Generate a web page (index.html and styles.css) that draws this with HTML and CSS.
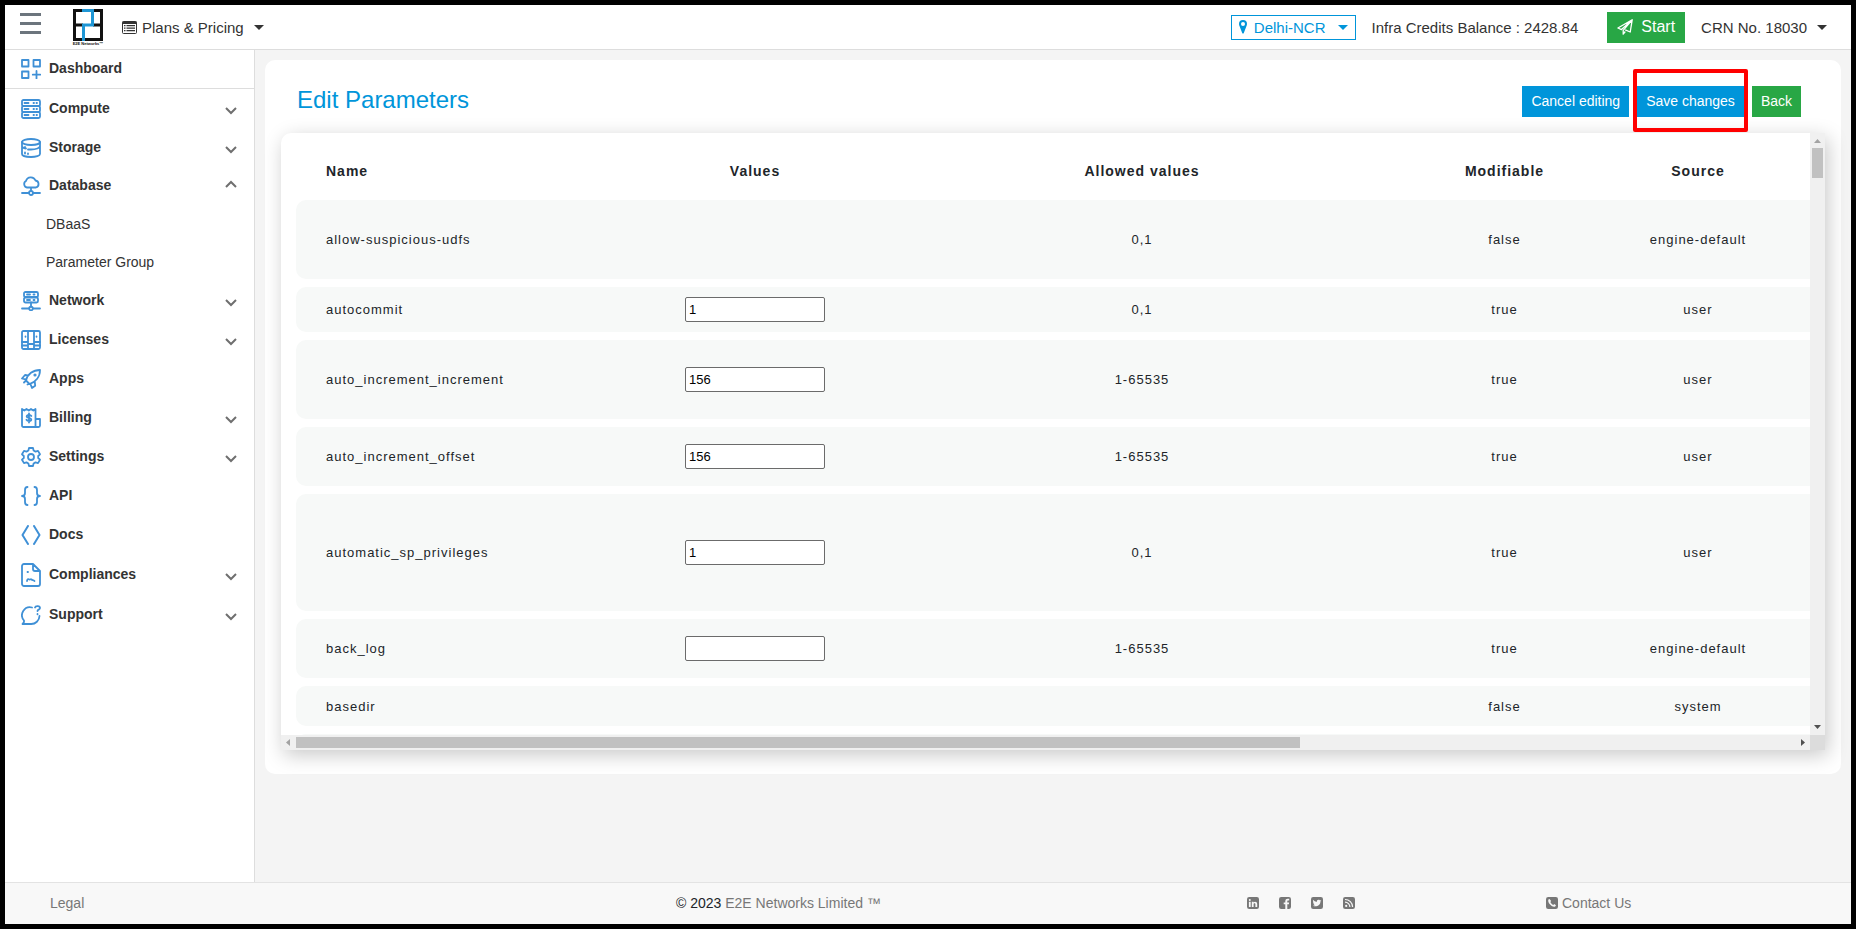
FILE: index.html
```html
<!DOCTYPE html>
<html lang="en">
<head>
<meta charset="utf-8">
<title>Edit Parameters</title>
<link rel="stylesheet" href="styles.css">
</head>
<body>
<div class="app">
  <header class="topbar">
    <button class="menu-toggle" aria-label="Toggle menu"><span></span><span></span><span></span></button>
    <a class="logo" href="#" aria-label="E2E Networks">
      <svg width="30" height="32" viewBox="0 0 30 32" fill="none" stroke-width="3">
        <path stroke="#111" d="M9 1.500H1.500V30.500H11M20 1.500H28.500V30.500H11M1.500 16H10M20 16H28.500"/>
        <path stroke="#1e96d5" d="M9 1.500H19.500V16H10.500V32"/>
      </svg>
      <span class="logo-name">E2E Networks™</span>
    </a>
    <button class="nav-drop">
      <svg width="15" height="13" viewBox="0 0 15 13"><path fill="none" stroke="#333" d="M.5 1.500a1 1 0 0 1 1-1h12a1 1 0 0 1 1 1v10a1 1 0 0 1-1 1h-12a1 1 0 0 1-1-1z"/><path fill="#333" d="M.5.5h14v2.500H.5zM2 4h1.500v1.200H2zM2 6.500h1.500v1.200H2zM2 9h1.500v1.200H2zM4.500 4H13v1.200H4.500zM4.500 6.500H13v1.200H4.500zM4.500 9H13v1.200H4.500z"/></svg>
      Plans &amp; Pricing <i class="caret"></i>
    </button>
    <div class="topbar-right">
      <button class="region">
        <svg width="8" height="14" viewBox="0 0 8 14"><path fill="#0095da" fill-rule="evenodd" d="M4 0a4 4 0 0 1 4 4c0 1-.3 1.600-.6 2.200L4.700 13.200a.8.8 0 0 1-1.400 0L.6 6.200C.3 5.600 0 5 0 4a4 4 0 0 1 4-4zm0 2a2 2 0 1 0 0 4 2 2 0 0 0 0-4z"/></svg>
        Delhi-NCR <i class="caret"></i>
      </button>
      <span class="credits">Infra Credits Balance : 2428.84</span>
      <button class="start">
        <svg width="16" height="16" viewBox="0 0 16 16" fill="none" stroke="#fff" stroke-width="1.300" stroke-linejoin="round"><path d="M15.200.8.9 9l3.600 1.600L15.200.8l-2 12.200-5-2.200M15.200.8 6.200 11.300V15.200L8.300 12.500"/></svg>
        Start
      </button>
      <button class="nav-drop">CRN No. 18030 <i class="caret"></i></button>
    </div>
  </header>

  <div class="body">
    <nav class="sidebar">
      <a class="item dashboard" href="#">
        <svg class="icon" viewBox="0 0 20 20"><path d="M1 1h6.500v6.500H1zM12.500 1H19v6.500h-6.500zM1 12.500h6.500V19H1zM15.500 12v7.500M11.800 15.700h7.500"/></svg><span>Dashboard</span></a>
      <a class="item" href="#">
        <svg class="icon" viewBox="0 0 20 20"><rect x="1" y="1" width="18" height="6" rx="1.500"/><rect x="1" y="7" width="18" height="6" rx="1.500"/><rect x="1" y="13" width="18" height="6" rx="1.500"/><path d="M3.500 4h4M12.500 4h.5M15.500 4h.5M3.500 10h4M12.500 10h.5M15.500 10h.5M3.500 16h4M12.500 16h.5M15.500 16h.5"/></svg><span>Compute</span><svg class="chev" viewBox="0 0 12 8"><path d="M1 1l5 5 5-5"/></svg></a>
      <a class="item" href="#">
        <svg class="icon" viewBox="0 0 20 20"><ellipse cx="10" cy="4" rx="9" ry="3"/><path d="M1 4v12c0 1.700 4 3 9 3s9-1.300 9-3V4M1 8c0 1.500 2 2.300 4 2.500M7 11.500h3c5 0 9-1.500 9-3.500M4 9v1M4 14.500v1M7 15.500v.5"/></svg><span>Storage</span><svg class="chev" viewBox="0 0 12 8"><path d="M1 1l5 5 5-5"/></svg></a>
      <a class="item short" href="#">
        <svg class="icon" viewBox="0 0 20 20"><path d="M6 11.500a3.500 3.500 0 0 1-1-6.500A5 5 0 0 1 14.500 4.500a3.600 3.600 0 0 1 .5 7zM10 11.500V15M1 17H8M12 17h7"/><circle cx="10" cy="17" r="2"/></svg><span>Database</span><svg class="chev up" viewBox="0 0 12 8"><path d="M1 7l5-5 5 5"/></svg></a>
      <a class="sub" href="#">DBaaS</a>
      <a class="sub" href="#">Parameter Group</a>
      <a class="item" href="#">
        <svg class="icon" viewBox="0 0 20 20"><rect x="3" y="1" width="14" height="5" rx="1.500"/><rect x="3" y="6.500" width="14" height="5" rx="1.500"/><path d="M6 3.500H9M12.500 3.500H13.500M6 9H9M12.500 9H13.500M10 11.500V16M1 17.500H8M12 17.500h7"/><circle cx="10" cy="17.500" r="1.800"/></svg><span>Network</span><svg class="chev" viewBox="0 0 12 8"><path d="M1 1l5 5 5-5"/></svg></a>
      <a class="item" href="#">
        <svg class="icon" viewBox="0 0 20 20"><rect x="1" y="1" width="18" height="18" rx="1.500"/><path d="M7 1v18M13 1v18M1 12h6M13 12h6M1 15.500h6M13 15.500h6M7 14h6M4.500 6.500v.3M15.500 6.500v.3"/></svg><span>Licenses</span><svg class="chev" viewBox="0 0 12 8"><path d="M1 1l5 5 5-5"/></svg></a>
      <a class="item" href="#">
        <svg class="icon" viewBox="0 0 20 20"><path d="M5 11.500C6.500 5 12 1 19 1c0 7-4.500 12-10.500 14zM7 6.500 4 6 1 9.500l4.300 1.200M9.500 15.200l1.500 3.800 3.200-2.200-.4-4M5 11.500l-2 2M8.500 15l-2 .5"/><circle cx="14" cy="6" r=".7"/></svg><span>Apps</span></a>
      <a class="item" href="#">
        <svg class="icon" viewBox="0 0 20 20"><path d="M1 1l2.300 1.500L5.500 1l2.300 1.500L10 1l2.300 1.500L14.500 1v18H2.500A1.500 1.500 0 0 1 1 17.500zM14.500 11H19v6.500A1.500 1.500 0 0 1 17.500 19h-3M10.300 8C9.500 6.500 5.500 6.500 5.700 8.600c.2 1.700 4.600 1 4.600 3 0 1.900-3.800 2-4.800.2M8 5.500v9"/></svg><span>Billing</span><svg class="chev" viewBox="0 0 12 8"><path d="M1 1l5 5 5-5"/></svg></a>
      <a class="item" href="#">
        <svg class="icon" viewBox="0 0 20 20"><path d="M8 1h4l.6 2.500 1.900 1.100L17 3.900l2 3.400-1.800 1.700v2l1.800 1.700-2 3.400-2.500-.7-1.900 1.100L12 19H8l-.6-2.500-1.900-1.100-2.500.7-2-3.400L2.800 11V9L1 7.300l2-3.400 2.500.7 1.900-1.100z"/><circle cx="10" cy="10" r="3"/></svg><span>Settings</span><svg class="chev" viewBox="0 0 12 8"><path d="M1 1l5 5 5-5"/></svg></a>
      <a class="item" href="#">
        <svg class="icon" viewBox="0 0 20 20"><path d="M6.500 1C4.500 1 4 2 4 4v3c0 2-1 3-3 3 2 0 3 1 3 3v3c0 2 .5 3 2.500 3M13.500 1c2 0 2.500 1 2.500 3v3c0 2 1 3 3 3-2 0-3 1-3 3v3c0 2-.5 3-2.500 3"/></svg><span>API</span></a>
      <a class="item" href="#">
        <svg class="icon bold" viewBox="0 0 20 20"><path d="M7 1 1.500 10 7 19M13 1l5.500 9L13 19"/></svg><span>Docs</span></a>
      <a class="item tall" href="#">
        <svg class="icon doc" viewBox="0 0 20 24"><path d="M3 1h9l7 7v13a2 2 0 0 1-2 2H3a2 2 0 0 1-2-2V3a2 2 0 0 1 2-2zM12 1v5a2 2 0 0 0 2 2h5M6.500 9h.5M6 18c.5-2.500 1.500-2 2.500-1.500S9.500 15.500 10.500 16.500s2 0 3 1.500"/></svg><span>Compliances</span><svg class="chev" viewBox="0 0 12 8"><path d="M1 1l5 5 5-5"/></svg></a>
      <a class="item" href="#">
        <svg class="icon" viewBox="0 0 20 20"><path d="M11 2.500A8 8 0 0 0 3 15.500V17L1.500 19H10A8.300 8.300 0 0 0 18.500 11M14 2.500C14.500.5 19 .5 19 3c0 1.800-2.500 1.500-2.500 3M16.500 9v.3"/></svg><span>Support</span><svg class="chev" viewBox="0 0 12 8"><path d="M1 1l5 5 5-5"/></svg></a>
    </nav>

    <main class="content">
      <section class="card">
        <div class="card-head">
          <h1>Edit Parameters</h1>
          <div class="actions">
            <button class="btn">Cancel editing</button>
            <div class="marked"><button class="btn">Save changes</button></div>
            <button class="btn green">Back</button>
          </div>
        </div>
        <div class="table-box">
          <div class="scroll-area">
          <table>
            <colgroup><col class="c-name"><col class="c-values"><col class="c-allowed"><col class="c-mod"><col class="c-source"><col></colgroup>
            <thead><tr><th>Name</th><th>Values</th><th>Allowed values</th><th>Modifiable</th><th>Source</th><th></th></tr></thead>
            <tbody>
              <tr class="lines-3"><td>allow-suspicious-udfs</td><td></td><td>0,1</td><td>false</td><td>engine-default</td><td></td></tr>
              <tr><td>autocommit</td><td><input type="text" aria-label="autocommit" value="1"></td><td>0,1</td><td>true</td><td>user</td><td></td></tr>
              <tr class="lines-3"><td>auto_increment_increment</td><td><input type="text" aria-label="auto_increment_increment" value="156"></td><td>1-65535</td><td>true</td><td>user</td><td></td></tr>
              <tr class="lines-2"><td>auto_increment_offset</td><td><input type="text" aria-label="auto_increment_offset" value="156"></td><td>1-65535</td><td>true</td><td>user</td><td></td></tr>
              <tr class="lines-5"><td>automatic_sp_privileges</td><td><input type="text" aria-label="automatic_sp_privileges" value="1"></td><td>0,1</td><td>true</td><td>user</td><td></td></tr>
              <tr class="lines-2"><td>back_log</td><td><input type="text" aria-label="back_log" value=""></td><td>1-65535</td><td>true</td><td>engine-default</td><td></td></tr>
              <tr class="lines-1"><td>basedir</td><td></td><td></td><td>false</td><td>system</td><td></td></tr>
              <tr class="lines-1"><td></td><td></td><td></td><td></td><td></td><td></td></tr>
            </tbody>
          </table>
          </div>
          <div class="bar vertical">
            <svg width="15" height="15" viewBox="0 0 15 15"><path fill="#a3a3a3" d="M4 10h7L7.500 6z"/></svg>
            <div class="track"><div class="thumb"></div></div>
            <svg width="15" height="15" viewBox="0 0 15 15"><path fill="#505050" d="M4 5h7L7.500 9z"/></svg>
          </div>
          <div class="bar horizontal">
            <svg width="15" height="15" viewBox="0 0 15 15"><path fill="#a3a3a3" d="M9 4v7L5 7.500z"/></svg>
            <div class="track"><div class="thumb"></div></div>
            <svg width="15" height="15" viewBox="0 0 15 15"><path fill="#505050" d="M6 4v7l4-3.500z"/></svg>
          </div>
          <div class="corner"></div>
        </div>
      </section>
    </main>
  </div>

  <footer class="footer">
    <a href="#">Legal</a>
    <div><span class="year">© 2023</span> <a href="#">E2E Networks Limited ™</a></div>
    <div class="social">
      <a href="#" aria-label="LinkedIn"><svg width="12" height="12" viewBox="0 0 12 12"><rect width="12" height="12" rx="2.200" fill="#777"/><path fill="#f8f8f8" d="M1.900 4.700h1.800V10H1.900zM2.800 2a1 1 0 1 1 0 2 1 1 0 0 1 0-2zM4.800 4.700h1.700v.7c.8-1.200 3.700-1.200 3.700 1.500V10H8.400V7.200c0-1.400-1.800-1.400-1.800 0V10H4.800z"/></svg></a>
      <a href="#" aria-label="Facebook"><svg width="12" height="12" viewBox="0 0 12 12"><rect width="12" height="12" rx="2.200" fill="#777"/><path fill="#f8f8f8" d="M6.300 12V7.300H4.700V5.500h1.600V4.200c0-1.700 1-2.500 2.500-2.500l1.400.1v1.600h-1c-.8 0-.9.400-.9.900v1.200h1.800l-.2 1.800H8.300V12z"/></svg></a>
      <a href="#" aria-label="Twitter"><svg width="12" height="12" viewBox="0 0 12 12"><rect width="12" height="12" rx="2.200" fill="#777"/><path fill="#f8f8f8" d="M10.300 3.500l-.9.900c.2 3.500-3.900 6.300-7.500 4.300.9 0 1.600-.2 2.200-.7-.7 0-1.200-.5-1.400-1.100h.6c-.8-.2-1.300-.9-1.300-1.700l.7.2c-.8-.6-.9-1.500-.5-2.300A4.700 4.700 0 0 0 5.800 4.900C5.500 3.200 7.500 2.100 8.800 3.300l1.100-.4-.7.900z"/></svg></a>
      <a href="#" aria-label="RSS"><svg width="12" height="12" viewBox="0 0 12 12"><rect width="12" height="12" rx="2.200" fill="#777"/><circle cx="3.200" cy="8.900" r="1.100" fill="#f8f8f8"/><path fill="none" stroke="#f8f8f8" stroke-width="1.200" d="M2 5.200A4.800 4.800 0 0 1 6.900 10M2 2.500A7.500 7.500 0 0 1 9.600 10"/></svg></a>
    </div>
    <a class="contact" href="#"><svg width="12" height="12" viewBox="0 0 12 12"><rect width="12" height="12" rx="2.200" fill="#777"/><path fill="#f8f8f8" d="M3.600 2 2.400 2.600C1.200 5.500 5.800 10.800 9.200 9.600L10 8.300 8.200 7.100l-.9.900C6 7.400 5 6.300 4.400 5l.7-.9z"/></svg>Contact Us</a>
  </footer>
</div>
</body>
</html>
```
FILE: styles.css
```css
* { box-sizing: border-box; }
body { margin: 0; font-family: "Liberation Sans", Arial, sans-serif; font-size: 14px; color: #333; }
a { color: inherit; text-decoration: none; }
button { font: inherit; color: inherit; background: none; border: 0; padding: 0; cursor: pointer; }
svg { display: block; flex: none; }

.app { display: flex; flex-direction: column; min-height: 100vh; border: 5px solid #000; background: #f4f4f4; }

.topbar { display: flex; align-items: center; height: 45px; padding: 0 24px 0 15px; background: #fff; border-bottom: 1px solid #ddd; font-size: 15px; }
.menu-toggle { display: flex; flex-direction: column; gap: 6px; width: 21px; margin-bottom: 8px; }
.menu-toggle span { height: 3px; background: #6c757d; }
.logo { display: flex; flex-direction: column; align-items: center; width: 30px; margin: 0 19px 0 32px; }
.logo-name { font-size: 4px; line-height: 5px; font-weight: bold; color: #111; white-space: nowrap; }
.nav-drop { display: flex; align-items: center; gap: 5px; white-space: nowrap; }
.caret { margin-left: 5px; border: 5px solid transparent; border-top-color: currentColor; border-bottom: 0; }
.topbar-right { display: flex; align-items: center; margin-left: auto; }
.region { display: flex; align-items: center; gap: 7px; height: 25px; padding: 0 7px; border: 1px solid #0095da; color: #0095da; }
.credits { margin: 0 29px 0 16px; }
.start { display: flex; align-items: center; gap: 8px; height: 31px; padding: 0 10px; margin-right: 16px; background: #28a745; color: #fff; font-size: 16px; }

.body { display: flex; flex: 1; }
.sidebar { flex: 0 0 250px; background: #fff; border-right: 1px solid #ddd; }
.item { display: flex; align-items: center; height: 39px; padding: 0 17px 0 16px; font-weight: bold; }
.item span { padding-bottom: 2px; }
.item.dashboard { border-bottom: 1px solid #ddd; }
.item.short { height: 38px; }
.item.tall { height: 41px; }
.icon { width: 20px; height: 20px; margin-right: 8px; fill: none; stroke: #3f90d6; stroke-width: 1.800; stroke-linejoin: round; stroke-linecap: round; }
.icon.bold { stroke-width: 2; }
.icon.doc { height: 24px; }
.chev { width: 12px; height: 8px; margin: 5px 0 0 auto; fill: none; stroke: #6f6f6f; stroke-width: 2; }
.chev.up { margin-top: -5px; }
.sub { display: flex; align-items: center; height: 38px; padding-left: 41px; }

.content { flex: 1; min-width: 0; padding: 10px; }
.card { background: #fff; border-radius: 10px; padding-bottom: 24px; }
.card-head { display: flex; align-items: flex-start; justify-content: space-between; padding: 26px 40px 16px 32px; }
h1 { margin: 0; font-size: 24px; line-height: 28px; font-weight: normal; color: #0095da; }
.actions { display: flex; gap: 8px; }
.btn { height: 31px; padding: 0 9px 2px; background: #0095da; color: #fff; white-space: nowrap; }
.btn.green { background: #28a745; }
.marked { position: relative; }
.marked::after { content: ""; position: absolute; inset: -17px -4px -15px -4px; border: 4px solid #f00; border-radius: 2px; pointer-events: none; }

.table-box { display: grid; grid-template: minmax(0, 1fr) 15px / minmax(0, 1fr) 15px; height: calc(100vh - 312px); margin: 0 16px; background: #fff; border-radius: 10px 0 0 0; box-shadow: 3px 5px 20px rgba(0, 0, 0, .22); }
.scroll-area { overflow: auto; padding: 0 15px; }
.bar { display: flex; background: #f0f0f0; }
.bar.vertical { flex-direction: column; }
.track { flex: 1; }
.thumb { background: #c1c1c1; }
.vertical .thumb { height: 30px; margin: 0 2px; }
.horizontal .thumb { width: 67%; height: 11px; margin: 2px 0; }
.corner { background: #dcdcdc; }
table { width: 2248px; table-layout: fixed; border-collapse: separate; border-spacing: 0 8px; color: #212529; }
.c-name { width: 329px; }
.c-values { width: 260px; }
.c-allowed { width: 514px; }
.c-mod { width: 211px; }
.c-source { width: 176px; }
th, td { padding: 10px 0; text-align: center; letter-spacing: 1px; }
th { height: 51px; padding: 18px 0 9px; font-size: 14px; }
td { height: 45px; font-size: 13px; line-height: 19px; background: #f7f9f8; }
th:first-child, td:first-child { padding-left: 30px; text-align: left; }
td:first-child { border-radius: 10px 0 0 10px; }
td:last-child { border-radius: 0 10px 10px 0; }
.lines-1 td { height: 40px; }
.lines-2 td { height: 59px; }
.lines-3 td { height: 79px; }
.lines-5 td { height: 117px; }
input { display: block; width: 140px; height: 25px; margin: 0 auto; padding: 0 3px; border: 1px solid #6b6b6b; border-radius: 2px; background: #fff; font: 13px "Liberation Sans", Arial, sans-serif; color: #000; }

.footer { display: grid; grid-template-columns: 626fr 571fr 299fr 305fr; align-items: center; height: 42px; padding: 0 0 2px 45px; background: #f8f8f8; border-top: 1px solid #e3e3e3; color: #777; }
.year { color: #212529; }
.social { display: flex; gap: 20px; }
.contact { display: flex; align-items: center; gap: 4px; }
```
